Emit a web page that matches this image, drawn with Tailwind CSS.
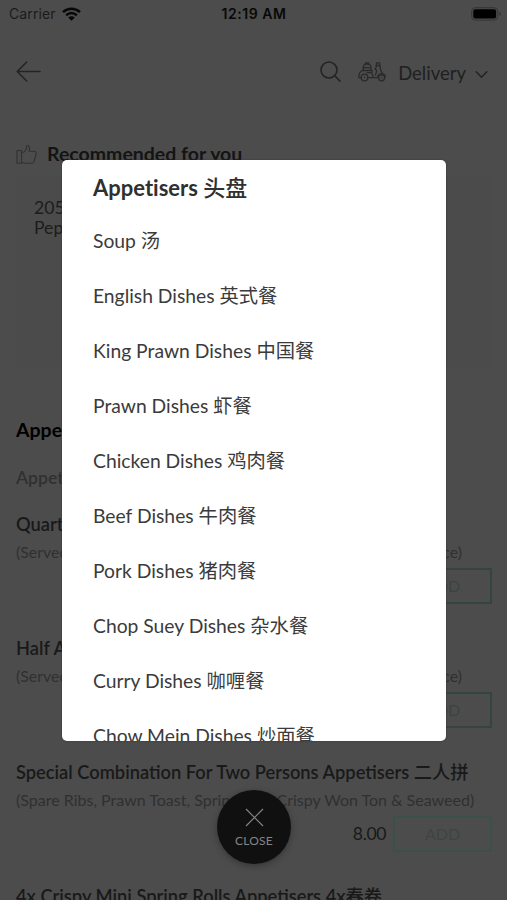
<!DOCTYPE html>
<html lang="en">
<head>
<meta charset="utf-8">
<title>Menu</title>
<script src="https://cdn.jsdelivr.net/npm/@tailwindcss/browser@4"></script>
</head>
<body class="bg-[#4c4c4c]">
<div class="relative w-[507px] h-[900px] overflow-hidden bg-[#4c4c4c] text-[#191919] whitespace-nowrap font-[Lato,'Noto_Sans_CJK_SC',sans-serif]">
  <div class="grid grid-cols-3 items-center h-7 pl-[9px] pr-[5px] font-[Inter,sans-serif]">
    <div class="-mt-px flex items-center gap-[6px] text-[14px] tracking-[0.1px] text-[#1b1b1b]">Carrier
      <svg class="w-[19px] h-[14px] text-[#080808]" viewBox="0 0 19 14" fill="none" stroke="currentColor" stroke-width="2.5"><path d="M1 5.2C6 .6 13 .6 18 5.2M4.1 8.3c3.3-2.9 7.5-2.9 10.8 0"/><path d="M6.2 10.4c2-1.7 4.6-1.7 6.6 0L9.5 13.7z" fill="currentColor" stroke="none"/></svg>
    </div>
    <div class="-mt-px -ml-[3px] text-center text-[14px] font-semibold tracking-[0.55px] text-[#080808]">12:19 AM</div>
    <svg class="-mt-px justify-self-end w-[31px] h-[14px]" viewBox="0 0 31 14"><rect x=".7" y=".7" width="26" height="12.4" rx="3.5" fill="none" stroke="#343434"/><rect x="2.3" y="2.3" width="22.8" height="9.2" rx="2" fill="#000"/><path d="M28.3 4.8c2 .6 2 3.6 0 4.2z" fill="#343434"/></svg>
  </div>
  <div class="flex items-center h-[88px] pl-4 pr-[19px]">
    <svg class="-mt-px w-[25px] h-[21px]" viewBox="0 0 25 21" fill="none" stroke="#242424" stroke-width="1.6" stroke-linecap="round" stroke-linejoin="round"><path d="M24 10.5H1.2M10.7 1 1.2 10.5l9.5 9.5"/></svg>
    <svg class="-mt-px ml-auto w-[21px] h-[21px]" viewBox="0 0 21 21" fill="none" stroke="#242424" stroke-width="1.6" stroke-linecap="round"><circle cx="9" cy="9" r="8"/><path d="m14.8 14.8 5.2 5.3"/></svg>
    <svg class="ml-[17px] w-[28px] h-[20px]" viewBox="0 0 28 20" fill="none" stroke="#2a2a2a" stroke-width="1.3" stroke-linecap="round" stroke-linejoin="round"><path d="M5.2 8.5V5.2c0-2 1.4-3 3.8-3s4 1 4 3v3.3zM7.4 2V.9h3.3V2M5.2 5.6H13M4 8.5h10.2M4.2 8.5C2 9.5.8 12 .8 15.6h2.4M9 10.7h4.8l1.5 4.9H10M13.8 10.7V8.5M18.4.8h3.1l1.2 7.5 2.2 4.4M17.9 3.5h4M16.8 6.8l2 1.6-1.3 4.7M18.4.8v4l-1.6 2M15.3 15.6h4.4c0-2.8 2-4.5 5-3.8 1.7.4 2.6 1.8 2.4 3"/><circle cx="6.5" cy="15.5" r="3.3"/><circle cx="23.6" cy="15.8" r="3"/><path d="M6.4 15.5h.2M23.5 15.8h.2"/></svg>
    <span class="ml-[12px] mt-px text-[18.5px] leading-6 text-[#202020]">Delivery</span>
    <svg class="ml-[9px] mt-[4px] w-[13px] h-[9px]" viewBox="0 0 13 9" fill="none" stroke="#242424" stroke-width="1.5" stroke-linecap="round" stroke-linejoin="round"><path d="m1.2 1.8 5.3 5.5 5.3-5.5"/></svg>
  </div>
  <div class="flex items-center gap-[9px] h-[28px] mt-6 pl-4 text-[19.5px] font-bold text-[#141414]">
    <svg class="w-[22px] h-[21px]" viewBox="0 0 22 21" fill="none" stroke="#313131" stroke-width="1.1" stroke-linejoin="round"><path d="M1 6.5h4.5v12.8H1zM5.5 8.3h2.2c2-1.4 3-3 3-6.8 2.8-.5 3.5 2.6 2.4 5.8h4.7c2 0 2.7 1.3 2.2 3l-1.9 7c-.4 1.4-1.2 2-2.5 2H9.8c-1.7 0-2.7-.3-4.3-1"/></svg>
    <h2>Recommended for you</h2>
  </div>
  <div class="h-[191px] mt-2 mx-4 px-[18px] pt-[22px] bg-[#4b4b4b] text-[17.6px] leading-5 text-[#1c1c1c]">205. Salt &amp;<br>Pepper</div>
  <div class="px-4 pt-[51px]">
    <h2 class="text-[19.5px] leading-6 font-bold text-black">Appetisers 头盘</h2>
    <p class="mt-6 text-[17.6px] leading-6 font-semibold text-[#303030]">Appetisers</p>
  </div>
  <ul class="px-4 pt-[22px]">
    <li class="h-[124px]">
      <h3 class="text-[18.3px] leading-6 font-semibold">Quarter Aromatic Crispy Duck</h3>
      <p class="mt-[4px] text-[15.95px] leading-6 text-[#303030] flex justify-between pr-[29px]"><span>(Served With Pancakes,</span><span>Sauce)</span></p>
      <div class="mt-[4px] -mr-px flex justify-end items-center gap-[7px]"><span class="text-[17.6px] tracking-[-0.4px]">9.00</span><div class="w-[99px] h-9 border-2 border-[#344540] flex items-center justify-center text-[16px] text-[#3b4341]">ADD</div></div>
    </li>
    <li class="h-[124px]">
      <h3 class="text-[18.3px] leading-6 font-semibold">Half Aromatic Crispy Duck</h3>
      <p class="mt-[4px] text-[15.95px] leading-6 text-[#303030] flex justify-between pr-[29px]"><span>(Served With Pancakes,</span><span>Sauce)</span></p>
      <div class="mt-[4px] -mr-px flex justify-end items-center gap-[7px]"><span class="text-[17.6px] tracking-[-0.4px]">17.00</span><div class="w-[99px] h-9 border-2 border-[#344540] flex items-center justify-center text-[16px] text-[#3b4341]">ADD</div></div>
    </li>
    <li class="h-[124px]">
      <h3 class="text-[18.3px] leading-6 font-semibold">Special Combination For Two Persons Appetisers <span class="font-medium">二人拼</span></h3>
      <p class="mt-[4px] text-[16px] leading-6 text-[#303030]">(Spare Ribs, Prawn Toast, Spring Roll, Crispy Won Ton &amp; Seaweed)</p>
      <div class="mt-[4px] -mr-px flex justify-end items-center gap-[7px]"><span class="text-[17.6px] tracking-[-0.4px]">8.00</span><div class="w-[99px] h-9 border-2 border-[#3b504a] flex items-center justify-center text-[16px] text-[#3d4542]">ADD</div></div>
    </li>
    <li><h3 class="text-[18.3px] leading-6 font-semibold">4x Crispy Mini Spring Rolls Appetisers 4x<span class="font-medium">春卷</span></h3></li>
  </ul>

  <div class="absolute left-[62px] top-[160px] w-[384px] h-[581px] rounded-[5px] overflow-hidden bg-white pl-[31px] text-[19.3px] text-[#3b3b3b] shadow-[0_0_2px_#333]">
    <div class="h-[55px] leading-[55px] text-[22px] font-bold text-[#303030] [font-variant-ligatures:none]">Appetisers <span class="font-medium">头盘</span></div>
    <div class="-mt-[2px] h-[55px] leading-[55px]">Soup 汤</div>
    <div class="h-[55px] leading-[55px]">English Dishes 英式餐</div>
    <div class="h-[55px] leading-[55px]">King Prawn Dishes 中国餐</div>
    <div class="h-[55px] leading-[55px]">Prawn Dishes 虾餐</div>
    <div class="h-[55px] leading-[55px]">Chicken Dishes 鸡肉餐</div>
    <div class="h-[55px] leading-[55px]">Beef Dishes 牛肉餐</div>
    <div class="h-[55px] leading-[55px]">Pork Dishes 猪肉餐</div>
    <div class="h-[55px] leading-[55px]">Chop Suey Dishes 杂水餐</div>
    <div class="h-[55px] leading-[55px]">Curry Dishes 咖喱餐</div>
    <div class="h-[55px] leading-[55px]">Chow Mein Dishes 炒面餐</div>
  </div>

  <div class="absolute left-[217px] top-[790px] size-[74px] rounded-full bg-[#101010] shadow-[0_2px_7px_rgba(0,0,0,0.3)] flex flex-col items-center pt-[18px] text-[#858585]">
    <svg class="w-[19px] h-[19px]" viewBox="0 0 19 19" fill="none" stroke="currentColor" stroke-width="1.2"><path d="m1 1 17 17M18 1 1 18"/></svg>
    <span class="mt-[6px] text-[12px] leading-4 tracking-[0.2px]">CLOSE</span>
  </div>
</div>
</body>
</html>
